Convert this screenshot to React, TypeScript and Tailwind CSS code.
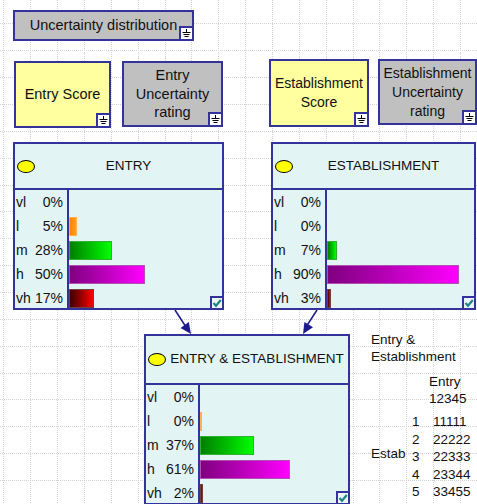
import type { ReactNode } from "react";

type Row = { label: string; pct: string; bar: number };

const barColors: Record<string, string> = {
    vl: "bg-linear-to-r from-[#000080] to-[#4040ff] border-[#4040c0]",
    l: "bg-linear-to-r from-[#ff8000] to-[#ffa020] border-[#ffb050]",
    m: "bg-linear-to-r from-[#008000] to-[#00ff00] border-[#30b030]",
    h: "bg-linear-to-r from-[#800080] to-[#ff00ff] border-[#b050b0]",
    vh: "bg-linear-to-r from-[#400000] to-[#ff0000] border-[#704040]",
};

const entryRows: Row[] = [
    { label: "vl", pct: "0%", bar: 0 },
    { label: "l", pct: "5%", bar: 8 },
    { label: "m", pct: "28%", bar: 43 },
    { label: "h", pct: "50%", bar: 76 },
    { label: "vh", pct: "17%", bar: 25 },
];

const establishmentRows: Row[] = [
    { label: "vl", pct: "0%", bar: 0 },
    { label: "l", pct: "0%", bar: 0 },
    { label: "m", pct: "7%", bar: 10 },
    { label: "h", pct: "90%", bar: 132 },
    { label: "vh", pct: "3%", bar: 4 },
];

const combinedRows: Row[] = [
    { label: "vl", pct: "0%", bar: 0 },
    { label: "l", pct: "0%", bar: 2 },
    { label: "m", pct: "37%", bar: 54 },
    { label: "h", pct: "61%", bar: 90 },
    { label: "vh", pct: "2%", bar: 3 },
];

function GridBackground() {
    const xs = Array.from({ length: 18 }, (_, k) => Math.round(3.3 + 26.87 * k) + 0.5);
    const ys = Array.from({ length: 19 }, (_, k) => Math.round(23.3 + 26.87 * k) + 0.5);
    return (
        <svg className="absolute inset-0" width={477} height={504}>
            {xs.map((x) => (
                <line key={"v" + x} x1={x} y1={0} x2={x} y2={504} stroke="#d2d2d2" strokeDasharray="1 1" />
            ))}
            {ys.map((y) => (
                <line key={"h" + y} x1={0} y1={y} x2={477} y2={y} stroke="#d2d2d2" strokeDasharray="1 1" />
            ))}
        </svg>
    );
}

function GroundIcon() {
    return (
        <div className="absolute right-0 bottom-0 w-[13px] h-[13px] border-l-2 border-t-2 border-[#333399] bg-white">
            <svg width={11} height={11} viewBox="0 0 11 11" className="block">
                <path d="M5.5 1V4.5M1.5 4.5H9.5M2.5 6.5H8.5M3.5 8.5H7.5" stroke="#000" strokeWidth={1} fill="none" />
            </svg>
        </div>
    );
}

function Box({ className, children }: { className: string; children: ReactNode }) {
    return (
        <div className={`absolute flex flex-col items-center justify-center text-center border-2 border-[#333399] ${className}`}>
            {children}
            <GroundIcon />
        </div>
    );
}

function CheckBox() {
    return (
        <div className="absolute -right-[2px] -bottom-[2px] w-[14px] h-[14px] border-2 border-[#333399] bg-[#eaf6f6]">
            <svg width={10} height={10} viewBox="0 0 10 10" className="block">
                <path d="M1.5 5L4 7.8L8.8 2" stroke="#1f8585" strokeWidth={2.2} fill="none" />
            </svg>
        </div>
    );
}

function BeliefNode({ className, header, title, rows }: { className: string; header: string; title: string; rows: Row[] }) {
    return (
        <div className={`absolute border-2 border-[#333399] bg-[#e2f4f4] ${className}`}>
            <div className={`flex items-center border-b-2 border-[#333399] ${header}`}>
                <div className="ml-[2px] w-[18px] h-[13px] rounded-[50%] bg-[#ffff00] border border-black shrink-0" />
                <div className="flex-1 text-center text-[13.5px]">{title}</div>
            </div>
            <div className="h-[118px] overflow-hidden">
                {rows.map((r) => (
                    <div key={r.label} className="flex h-[24px]">
                        <div className="w-[54px] shrink-0 flex items-center justify-between pl-[1px] pr-[4px] border-r-2 border-[#333399] text-[14px]">
                            <span>{r.label}</span>
                            <span>{r.pct}</span>
                        </div>
                        <div className="flex items-center">
                            {r.bar > 0 && (
                                <div className={`h-[19px] border ${barColors[r.label]}`} style={{ width: r.bar }} />
                            )}
                        </div>
                    </div>
                ))}
            </div>
            <CheckBox />
        </div>
    );
}

function Arrows() {
    return (
        <svg className="absolute inset-0" width={477} height={504}>
            <line x1={175} y1={310} x2={186} y2={327} stroke="#1c1c8c" strokeWidth={1.5} />
            <polygon points="191,334 180.6,327.9 188.8,322.1" fill="#1c1c8c" />
            <line x1={317} y1={310} x2={306} y2={327} stroke="#1c1c8c" strokeWidth={1.5} />
            <polygon points="303,334 304.4,322 313,327.2" fill="#1c1c8c" />
        </svg>
    );
}

function JointTable() {
    const rows = [
        ["1", "11111"],
        ["2", "22222"],
        ["3", "22333"],
        ["4", "23344"],
        ["5", "33455"],
    ];
    return (
        <div className="absolute left-[371px] top-[331px] text-[13.5px] leading-[17px]">
            <div>Entry &amp;</div>
            <div>Establishment</div>
            <div className="pl-[58px] mt-[8px]">
                <div>Entry</div>
                <div>12345</div>
            </div>
            <div className="flex mt-[6px]">
                <div className="w-[41px] self-center mt-[-6px]">Estab</div>
                <div className="leading-[17.5px]">
                    {rows.map(([n, v]) => (
                        <div key={n} className="flex">
                            <span className="w-[21px]">{n}</span>
                            <span>{v}</span>
                        </div>
                    ))}
                </div>
            </div>
        </div>
    );
}

export default function App() {
    return (
        <div className="relative w-[477px] h-[504px] overflow-hidden bg-white text-[#111] font-['Liberation_Sans',Arial,sans-serif]">
            <GridBackground />
            <Arrows />

            <Box className="left-[13px] top-[10px] w-[181px] h-[31px] bg-[#c0c0c0] text-[14.5px]">
                Uncertainty distribution
            </Box>

            <Box className="left-[14px] top-[61px] w-[97px] h-[67px] bg-[#ffffa0] text-[14.5px]">
                Entry Score
            </Box>
            <Box className="left-[122px] top-[61px] w-[101px] h-[66px] bg-[#c0c0c0] text-[14.5px] leading-[18.5px]">
                <div>Entry</div>
                <div>Uncertainty</div>
                <div>rating</div>
            </Box>
            <Box className="left-[269px] top-[59px] w-[100px] h-[68px] bg-[#ffffa0] text-[14px] leading-[19px]">
                <div>Establishment</div>
                <div>Score</div>
            </Box>
            <Box className="left-[378px] top-[59px] w-[99px] h-[66px] bg-[#c0c0c0] text-[14px] leading-[19px]">
                <div>Establishment</div>
                <div>Uncertainty</div>
                <div>rating</div>
            </Box>

            <BeliefNode className="left-[13px] top-[142px] w-[211px]" header="h-[46px]" title="ENTRY" rows={entryRows} />
            <BeliefNode className="left-[271px] top-[142px] w-[205px]" header="h-[46px]" title="ESTABLISHMENT" rows={establishmentRows} />
            <BeliefNode className="left-[144px] top-[334px] w-[206px]" header="h-[49px]" title="ENTRY & ESTABLISHMENT" rows={combinedRows} />

            <JointTable />
        </div>
    );
}
